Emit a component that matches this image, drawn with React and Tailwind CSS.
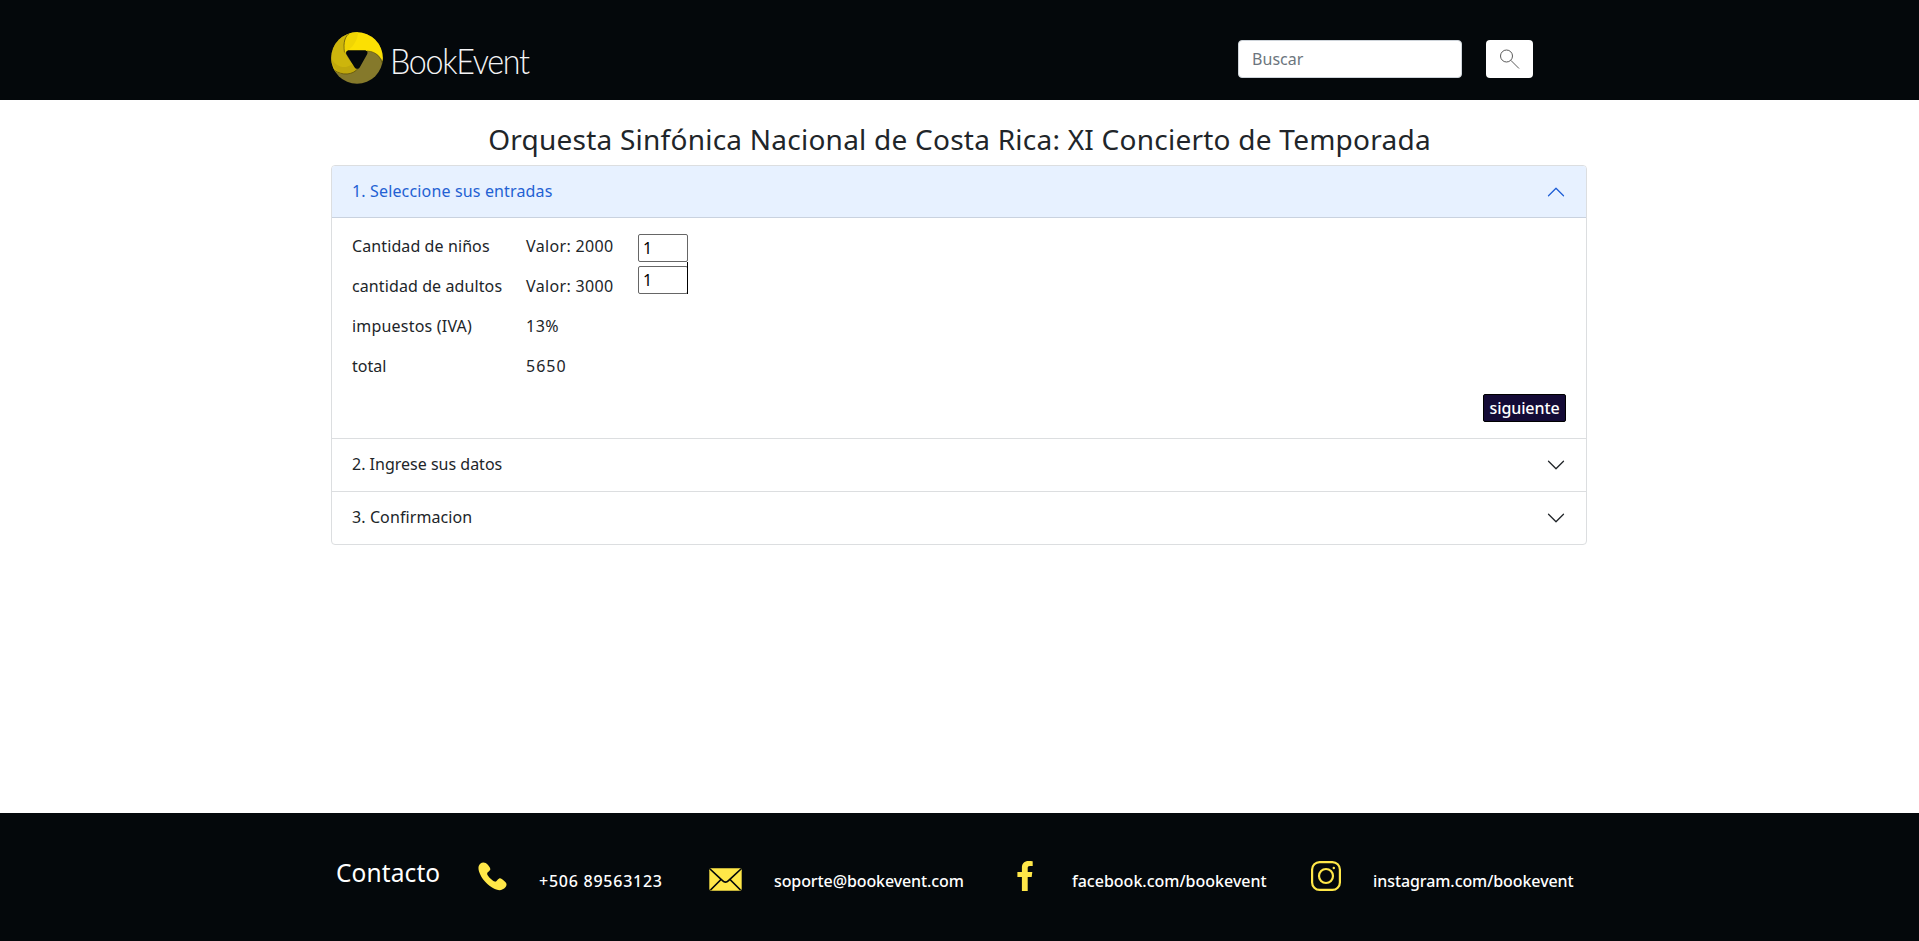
function Logo() {
  return (
    <svg viewBox="0 0 52 52" className="size-[52px]" aria-hidden="true">
      <defs>
        <clipPath id="disc">
          <circle cx="26" cy="26" r="25.8" />
        </clipPath>
      </defs>
      <g clipPath="url(#disc)">
        <rect width="52" height="52" fill="#85792b" />
        <path d="M-2 -2H28C20 -1 14 4 13 11C12 19 17 28 26 36.500C23 41 16 43 9 41.500C5 40.500 2 38 -2 34Z" fill="#cdb50c" />
        <path d="M0 26C1 36 8 42 14 42C20 42 24 40 26 37L21 32C14 38 5 35 0 26Z" fill="#c0a80c" />
        <path d="M13.500 20.500C12 10 15 4 20 -1H54V36C52 26 46 19.500 36 19Z" fill="#fbe003" />
        <path d="M13.500 20.500C12 10 15 4 20 0L27 0C27 8 22 16 13.500 20.500Z" fill="#f0d504" />
        <path d="M13.500 20.500C12 10 14 4 19 1" fill="none" stroke="#6b5f10" strokeWidth="0.8" />
        <path d="M52 34C50 26 46 19.500 36 19" fill="none" stroke="#6b5f10" strokeWidth="0.8" />
        <path d="M3 38C11 44 22 43 27 36.500" fill="none" stroke="#5d520f" strokeWidth="0.8" />
      </g>
      <path d="M18 18.300H33.500C36.200 18.300 37.200 20.500 36 22.500L28.800 35.200C27.600 37.400 24.800 37.400 23.500 35.200L15.600 22.500C14.400 20.500 15.500 18.300 18 18.300Z" fill="#04080b" />
    </svg>
  );
}

function Chevron({ open }) {
  return (
    <svg viewBox="0 0 16 16" className={open ? "size-5 rotate-180 text-[#1f5fd6]" : "size-5 text-[#212529]"} fill="currentColor" aria-hidden="true">
      <path fillRule="evenodd" d="M1.646 4.646a.5.5 0 0 1 .708 0L8 10.293l5.646-5.647a.5.5 0 0 1 .708.708l-6 6a.5.5 0 0 1-.708 0l-6-6a.5.5 0 0 1 0-.708z" />
    </svg>
  );
}

function PhoneIcon() {
  return (
    <svg viewBox="0 0 29 29" className="size-[29px]" fill="#ffe748" aria-hidden="true">
      <path d="M2.200 1.800C4.500-.3 7.800.3 9.600 2.600C11.200 4.600 12.700 6.300 12.200 7.800C11.600 9.600 8.600 10.200 9.200 12.200C10 14.500 14.400 18.800 16.900 19.600C18.700 20.100 19.400 17 21.200 16.400C22.900 15.900 24.600 17.600 26.800 19.400C29 21.200 29 23.300 27.400 25.300C25 28.300 20.800 29 16.800 27C9.500 23.400 3.200 16.500 1 9.500C.1 6.400.2 3.600 2.200 1.800Z" />
    </svg>
  );
}

function MailIcon() {
  return (
    <svg viewBox="0 0 33 23" className="h-[23px] w-[33px]" aria-hidden="true">
      <rect x="0.300" y="0.200" width="32.400" height="22.600" rx="2" fill="#ffe748" />
      <path d="M1 1L13.500 12.600Q16.500 15.600 19.500 12.600L32 1M1.500 22L12 11.500M31.500 22L21 11.500" fill="none" stroke="#04080b" strokeWidth="1.700" />
    </svg>
  );
}

function FacebookIcon() {
  return (
    <svg viewBox="0 0 16 30" className="h-[30px] w-4" fill="#ffe748" aria-hidden="true">
      <path d="M15.700.3V5H13C11.200 5 10.700 5.800 10.700 7.200V10.900H15.300L14.700 16H10.700V30H4.900V16H.4V10.900H4.900V6.700C4.900 2.300 7.500 0 11.500 0C13.400 0 15 .1 15.700.3Z" />
    </svg>
  );
}

function InstagramIcon() {
  return (
    <svg viewBox="0 0 30 30" className="size-[30px]" fill="none" stroke="#ffe748" strokeWidth="2.200" aria-hidden="true">
      <rect x="1.100" y="1.100" width="27.800" height="27.800" rx="7.500" />
      <circle cx="15" cy="15" r="7" />
      <circle cx="22.800" cy="7" r="1.200" fill="#ffe748" stroke="none" />
    </svg>
  );
}

export default function App() {
  return (
    <div className="flex h-[941px] w-full flex-col bg-white font-['Noto_Sans',sans-serif] text-base text-[#212529]">
      <header className="h-[100px] bg-[#04080b]">
        <div className="ml-[331px] flex w-[1256px] items-start justify-between">
          <div className="flex pt-8">
            <Logo />
            <span className="ml-[7px] mt-3 origin-left scale-x-[0.935] font-['Lato',sans-serif] text-[34.5px] font-light leading-[34px] tracking-[-1.4px] text-[#f4f4f6]">BookEvent</span>
          </div>
          <div className="mr-[54px] flex gap-6 pt-10">
            <input placeholder="Buscar" className="h-[38px] w-[224px] rounded border border-[#ced4da] bg-white px-[13px] tracking-[0.05px] placeholder:text-[#6c757d]" />
            <button className="flex h-[38px] w-[47px] items-start justify-start rounded bg-white pl-3.5 pt-[9px]" aria-label="Buscar">
              <svg viewBox="0 0 20 20" className="size-5" fill="none" stroke="#5a5a5a" strokeWidth="1" aria-hidden="true">
                <circle cx="6.500" cy="7" r="6" />
                <path d="M10.800 11.300L19 19.500" />
              </svg>
            </button>
          </div>
        </div>
      </header>

      <main className="flex-1">
        <h1 className="pb-[9px] pt-[22px] text-center text-[28px] leading-[34px] tracking-[0.24px]">
          Orquesta Sinfónica Nacional de Costa Rica: XI Concierto de Temporada
        </h1>
        <div className="ml-[331px] w-[1256px] overflow-hidden rounded border border-[#dcdee0]">
          <section>
            <div className="flex h-[52px] items-start justify-between border-b border-[#c9d2df] bg-[#e7f1ff] px-5 pt-[13px] text-[#2361d3]">
              <span className="tracking-[0.15px]">1. Seleccione sus entradas</span>
              <span className="mt-[3px]"><Chevron open /></span>
            </div>
            <div className="h-[220px] px-5 pt-4">
              <div className="flex h-[152px] gap-6">
                <div className="flex w-[150px] flex-col gap-4 whitespace-nowrap">
                  <span className="tracking-[0.1px]">Cantidad de niños</span>
                  <span className="tracking-[0.1px]">cantidad de adultos</span>
                  <span className="tracking-[0.2px]">impuestos (IVA)</span>
                  <span>total</span>
                </div>
                <div className="flex w-[88px] flex-col gap-4 whitespace-nowrap">
                  <span className="tracking-[0.35px]">Valor: 2000</span>
                  <span className="tracking-[0.35px]">Valor: 3000</span>
                  <span className="tracking-[0.5px]">13%</span>
                  <span className="tracking-[1px]">5650</span>
                </div>
                <div className="relative flex w-[50px] flex-col gap-1 text-black">
                  <input defaultValue="1" className="h-7 w-[50px] rounded-xs border border-[#666666] px-1" />
                  <input defaultValue="1" className="h-7 w-[50px] rounded-xs border border-[#666666] px-1" />
                  <span className="absolute right-0 top-7 h-8 w-px bg-black" />
                </div>
              </div>
              <div className="mt-2 flex justify-end">
                <button className="h-7 w-[83px] rounded-xs border border-black bg-[#140b36] font-medium leading-[26px] tracking-[-0.1px] text-white">siguiente</button>
              </div>
            </div>
          </section>
          <section className="flex h-[53px] items-start justify-between border-t border-[#dcdee0] px-5 pt-[13px]">
            <span>2. Ingrese sus datos</span>
            <span className="mt-[3px]"><Chevron /></span>
          </section>
          <section className="flex h-[53px] items-start justify-between border-t border-[#dcdee0] px-5 pt-[13px]">
            <span className="tracking-[0.1px]">3. Confirmacion</span>
            <span className="mt-[3px]"><Chevron /></span>
          </section>
        </div>
      </main>

      <footer className="h-[128px] bg-[#04080b] text-white">
        <div className="ml-[331px] flex w-[1256px] items-start pl-[5px] font-medium">
          <h2 className="w-[142px] pt-[45px] text-[24.5px] font-normal leading-[30px] tracking-[0.1px]">Contacto</h2>
          <div className="flex w-[231px] gap-8">
            <span className="pt-[49px]"><PhoneIcon /></span>
            <span className="pt-14 tracking-[0.75px]">+506 89563123</span>
          </div>
          <div className="flex w-[308px] gap-8">
            <span className="pt-[55px]"><MailIcon /></span>
            <span className="pt-14 tracking-[-0.1px]">soporte@bookevent.com</span>
          </div>
          <div className="flex w-[294px] gap-[39px]">
            <span className="pt-12"><FacebookIcon /></span>
            <span className="pt-14">facebook.com/bookevent</span>
          </div>
          <div className="flex gap-8">
            <span className="pt-12"><InstagramIcon /></span>
            <span className="pt-14 tracking-[-0.08px]">instagram.com/bookevent</span>
          </div>
        </div>
      </footer>
    </div>
  );
}
